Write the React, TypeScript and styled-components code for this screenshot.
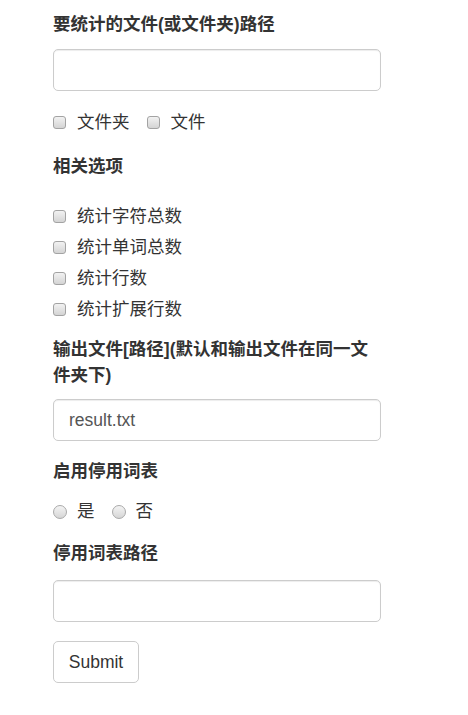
import React, { ReactElement } from 'react';
import styled, { createGlobalStyle } from 'styled-components';

const FONT = '"Liberation Sans", "Noto Sans CJK SC", sans-serif';
const FONT_SIZE = 17.5;
const LINE = 25;
const INPUT_HEIGHT = 42;
const RADIUS = 5;

const GlobalStyle = createGlobalStyle`
    html, body {
        margin: 0;
        padding: 0;
        background: #fff;
    }
    body {
        font-family: ${FONT};
        font-size: ${FONT_SIZE}px;
        color: #333;
    }
`;

const checkOptions = ['统计字符总数', '统计单词总数', '统计行数', '统计扩展行数'];

export default function App(): ReactElement {
    return (
        <>
            <GlobalStyle />
            <Form onSubmit={(e) => e.preventDefault()}>
                <Group>
                    <Label>要统计的文件(或文件夹)路径</Label>
                    <TextInput type="text" />
                </Group>
                <Group>
                    <InlineRow>
                        <Choice>
                            <CheckBox type="checkbox" />
                            文件夹
                        </Choice>
                        <Choice>
                            <CheckBox type="checkbox" />
                            文件
                        </Choice>
                    </InlineRow>
                </Group>
                <Group $bottom={14}>
                    <Label>相关选项</Label>
                    <CheckList>
                        {checkOptions.map((opt) => (
                            <Choice key={opt}>
                                <CheckBox type="checkbox" />
                                {opt}
                            </Choice>
                        ))}
                    </CheckList>
                </Group>
                <Group $bottom={18}>
                    <Label $line={26} $gap={11}>
                        输出文件[路径](默认和输出文件在同一文件夹下)
                    </Label>
                    <TextInput type="text" defaultValue="result.txt" />
                </Group>
                <Group $bottom={17}>
                    <Label $gap={15}>启用停用词表</Label>
                    <InlineRow>
                        <Choice $gap={10}>
                            <RadioBox type="radio" name="stop" />
                            是
                        </Choice>
                        <Choice $gap={10}>
                            <RadioBox type="radio" name="stop" />
                            否
                        </Choice>
                    </InlineRow>
                </Group>
                <Group $bottom={19}>
                    <Label $gap={14}>停用词表路径</Label>
                    <TextInput type="text" />
                </Group>
                <SubmitButton type="submit">Submit</SubmitButton>
            </Form>
        </>
    );
}

const Form = styled.form`
    width: 328px;
    padding: 12px 0 30px 53px;
`;

const Group = styled.div<{ $bottom?: number }>`
    margin-bottom: ${(p) => p.$bottom ?? 19}px;
`;

const Label = styled.label<{ $line?: number; $gap?: number }>`
    display: block;
    font-weight: bold;
    font-size: ${FONT_SIZE}px;
    line-height: ${(p) => p.$line ?? LINE}px;
    margin-bottom: ${(p) => p.$gap ?? 12}px;
    color: #333;
`;

const TextInput = styled.input`
    display: block;
    box-sizing: border-box;
    width: 100%;
    height: ${INPUT_HEIGHT}px;
    padding: 0 15px;
    border: 1px solid #ccc;
    border-radius: ${RADIUS}px;
    box-shadow: inset 0 1px 1px rgba(0, 0, 0, 0.075);
    font-family: ${FONT};
    font-size: ${FONT_SIZE}px;
    color: #555;
    background: #fff;
    outline: none;
`;

const InlineRow = styled.div`
    display: flex;
    gap: 17px;
    height: ${LINE}px;
    align-items: center;
`;

const CheckList = styled.div`
    display: flex;
    flex-direction: column;
    gap: 6px;
    margin-top: 25px;
`;

const Choice = styled.label<{ $gap?: number }>`
    display: flex;
    align-items: center;
    gap: ${(p) => p.$gap ?? 11}px;
    height: ${LINE}px;
    line-height: ${LINE}px;
    font-size: ${FONT_SIZE}px;
    color: #333;
`;

const CheckBox = styled.input`
    appearance: none;
    margin: 0;
    width: 13px;
    height: 13px;
    border: 1px solid #a3a3a3;
    border-radius: 3px;
    background: linear-gradient(#f2f2f2, #d4d4d4);
    box-sizing: border-box;
    flex: none;
`;

const RadioBox = styled.input`
    appearance: none;
    margin: 0;
    width: 14px;
    height: 14px;
    border: 1px solid #a9a9a9;
    border-radius: 50%;
    background: linear-gradient(#f4f4f4, #d6d6d6);
    box-sizing: border-box;
    flex: none;
`;

const SubmitButton = styled.button`
    display: block;
    box-sizing: border-box;
    width: 86px;
    height: 42px;
    border: 1px solid #ccc;
    border-radius: ${RADIUS}px;
    background: #fff;
    font-family: ${FONT};
    font-size: ${FONT_SIZE}px;
    color: #333;
    padding: 0;
    cursor: pointer;
`;
